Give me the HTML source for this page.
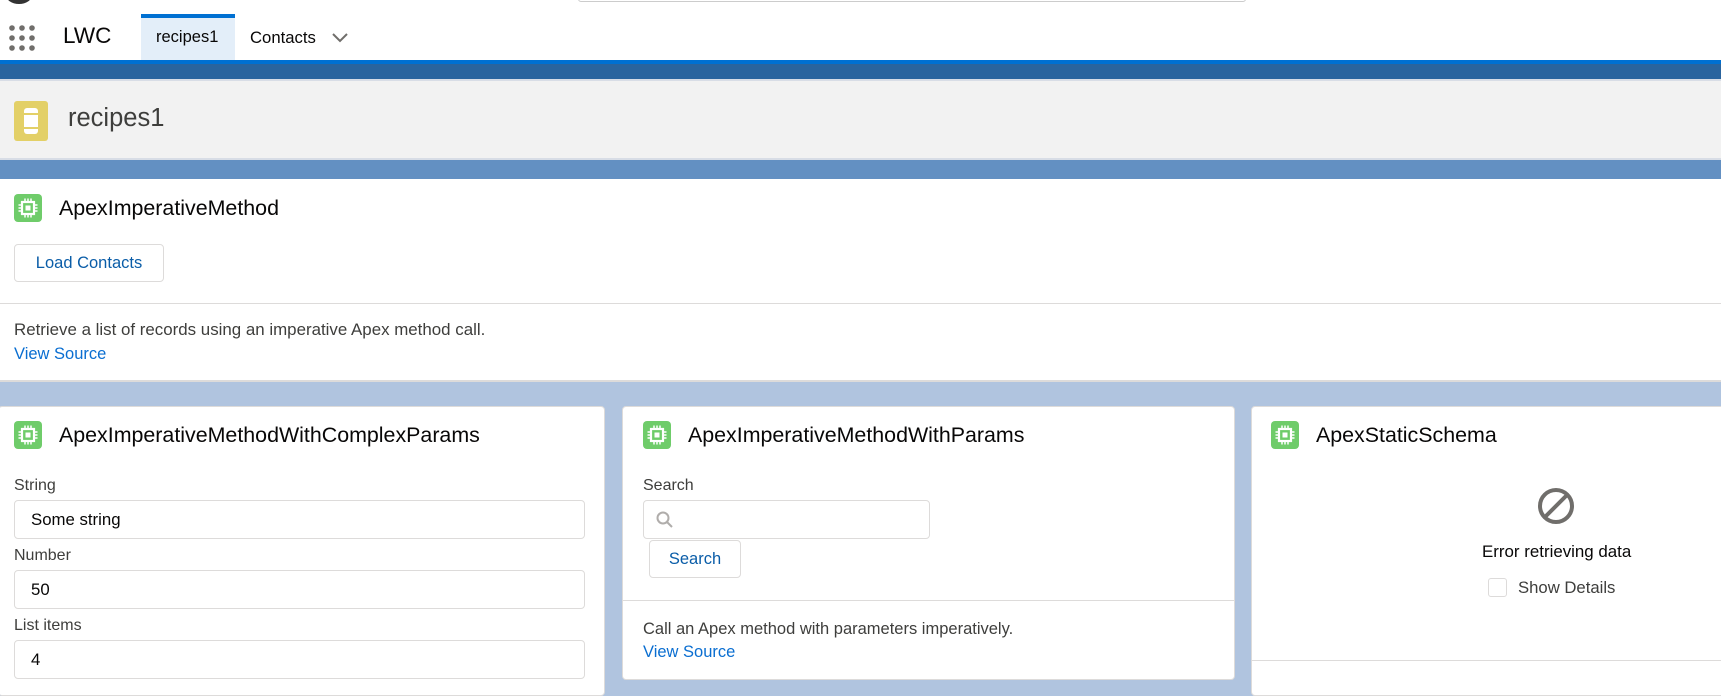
<!DOCTYPE html>
<html><head><meta charset="utf-8"><style>
*{box-sizing:border-box;margin:0;padding:0}
body{width:1721px;height:684px;overflow:hidden;background:#b0c4df;font-family:"Liberation Sans",sans-serif;color:#080707;position:relative;font-size:16px}
.a{position:absolute}
.ic{position:absolute;width:28px;height:28px}
.t{position:absolute;font-size:21.4px}
.card{position:absolute;background:#fff;border:1px solid #dddbda;border-radius:4px}
.lbl{position:absolute;font-size:16px;color:#3e3e3c}
.inp{position:absolute;border:1px solid #dddbda;border-radius:4px;background:#fff;font-size:16.8px;padding-left:16px;line-height:37px}
.btn{position:absolute;border:1px solid #dddbda;border-radius:4px;background:#fff;color:#0a5da8;font-size:16.5px;text-align:center}
.lnk{color:#0a6ed1;font-size:16.5px}
.hr{position:absolute;height:1px;background:#dddbda}
</style></head><body>
<svg width="0" height="0" style="position:absolute"><defs><symbol id="chip" viewBox="0 0 28 28"><rect width="28" height="28" rx="4" fill="#6fcc6a"/><rect x="8" y="8" width="12" height="12" fill="none" stroke="#fff" stroke-width="2.2"/><rect x="11.5" y="11.5" width="5" height="5" fill="#fff"/><g stroke="#fff" stroke-width="1.5"><path d="M11 4.5v3M14 4.5v3M17 4.5v3M11 20.5v3M14 20.5v3M17 20.5v3M4.5 11h3M4.5 14h3M4.5 17h3M20.5 11h3M20.5 14h3M20.5 17h3"/></g></symbol></defs></svg>
<div class="a" style="left:0;top:0;width:1721px;height:64px;background:#fff"></div>
<div class="a" style="left:6px;top:-14px;width:26px;height:18px;border-radius:50%;background:#333"></div>
<div class="a" style="left:578px;top:-4px;width:668px;height:6px;border:1px solid #ccc;border-radius:4px"></div>
<div class="a" style="left:8px;top:24px;width:28px;height:28px">
<svg width="28" height="28"><g fill="#706e6b"><circle cx="4" cy="4" r="2.8"/><circle cx="14" cy="4" r="2.8"/><circle cx="24" cy="4" r="2.8"/><circle cx="4" cy="14" r="2.8"/><circle cx="14" cy="14" r="2.8"/><circle cx="24" cy="14" r="2.8"/><circle cx="4" cy="24" r="2.8"/><circle cx="14" cy="24" r="2.8"/><circle cx="24" cy="24" r="2.8"/></g></svg></div>
<div class="a" style="left:63px;top:23px;font-size:22.5px">LWC</div>
<div class="a" style="left:141px;top:14px;width:94px;height:46px;background:#e3eef9;border-top:4px solid #0070d2"></div>
<div class="a" style="left:156px;top:28px;font-size:16.5px">recipes1</div>
<div class="a" style="left:250px;top:28px;font-size:16.7px">Contacts</div>
<svg class="a" style="left:332px;top:33px" width="16" height="10"><path d="M1 1 L8 8 L15 1" stroke="#706e6b" stroke-width="2" fill="none"/></svg>
<div class="a" style="left:0;top:60px;width:1721px;height:4px;background:#0070d2"></div>
<div class="a" style="left:0;top:64px;width:1721px;height:15px;background:#2a649e"></div>
<div class="a" style="left:0;top:79px;width:1721px;height:81px;background:#f2f2f2;border-top:2px solid #d8dde6;border-bottom:2px solid #d8dde6"></div>
<div class="a" style="left:14px;top:101px;width:34px;height:40px;background:#e3d067;border-radius:3px"></div>
<div class="a" style="left:24px;top:108px;width:14px;height:26px;background:#fff;border-radius:3px"></div>
<div class="a" style="left:24px;top:113px;width:14px;height:2px;background:#e3d067"></div>
<div class="a" style="left:24px;top:127px;width:14px;height:2px;background:#e3d067"></div>
<div class="a" style="left:68px;top:104px;font-size:25.5px;color:#3e3e3c">recipes1</div>
<div class="a" style="left:0;top:160px;width:1721px;height:19px;background:#6390c2"></div>
<div class="a" style="left:0;top:179px;width:1721px;height:203px;background:#fff;border-bottom:2px solid #dddbda"></div>
<svg class="ic" style="left:14px;top:194px"><use href="#chip"/></svg>
<div class="t" style="left:59px;top:196px">ApexImperativeMethod</div>
<div class="btn" style="left:14px;top:244px;width:150px;height:38px;line-height:36px">Load Contacts</div>
<div class="hr" style="left:0;top:303px;width:1721px"></div>
<div class="a" style="left:14px;top:320px;color:#3e3e3c;font-size:16.9px">Retrieve a list of records using an imperative Apex method call.</div>
<div class="a lnk" style="left:14px;top:345px">View Source</div>

<div class="card" style="left:-2px;top:406px;width:607px;height:290px"></div>
<svg class="ic" style="left:14px;top:421px"><use href="#chip"/></svg>
<div class="t" style="left:59px;top:423px">ApexImperativeMethodWithComplexParams</div>
<div class="lbl" style="left:14px;top:477px">String</div>
<div class="inp" style="left:14px;top:500px;width:571px;height:39px">Some string</div>
<div class="lbl" style="left:14px;top:547px">Number</div>
<div class="inp" style="left:14px;top:570px;width:571px;height:39px">50</div>
<div class="lbl" style="left:14px;top:617px">List items</div>
<div class="inp" style="left:14px;top:640px;width:571px;height:39px">4</div>

<div class="card" style="left:622px;top:406px;width:613px;height:274px"></div>
<svg class="ic" style="left:643px;top:421px"><use href="#chip"/></svg>
<div class="t" style="left:688px;top:423px">ApexImperativeMethodWithParams</div>
<div class="lbl" style="left:643px;top:477px">Search</div>
<div class="inp" style="left:643px;top:500px;width:287px;height:39px"></div>
<svg class="a" style="left:656px;top:511px" width="18" height="18"><circle cx="7" cy="7" r="5.5" stroke="#b0adab" stroke-width="2" fill="none"/><path d="M11 11 L16 16" stroke="#b0adab" stroke-width="2"/></svg>
<div class="btn" style="left:649px;top:540px;width:92px;height:38px;line-height:36px">Search</div>
<div class="hr" style="left:623px;top:600px;width:611px"></div>
<div class="a" style="left:643px;top:620px;color:#3e3e3c;font-size:16.5px">Call an Apex method with parameters imperatively.</div>
<div class="a lnk" style="left:643px;top:643px">View Source</div>

<div class="card" style="left:1251px;top:406px;width:480px;height:290px"></div>
<svg class="ic" style="left:1271px;top:421px"><use href="#chip"/></svg>
<div class="t" style="left:1316px;top:423px">ApexStaticSchema</div>
<svg class="a" style="left:1537px;top:487px" width="38" height="38"><circle cx="19" cy="19" r="16" stroke="#706e6b" stroke-width="4" fill="none"/><path d="M8 30 L30 8" stroke="#706e6b" stroke-width="4"/></svg>
<div class="a" style="left:1482px;top:542px;font-size:16.9px">Error retrieving data</div>
<div class="a" style="left:1488px;top:578px;width:19px;height:19px;border:1px solid #dddbda;border-radius:3px"></div>
<div class="a" style="left:1518px;top:578px;font-size:16.7px;color:#3e3e3c">Show Details</div>
<div class="hr" style="left:1252px;top:660px;width:469px"></div>
</body></html>
